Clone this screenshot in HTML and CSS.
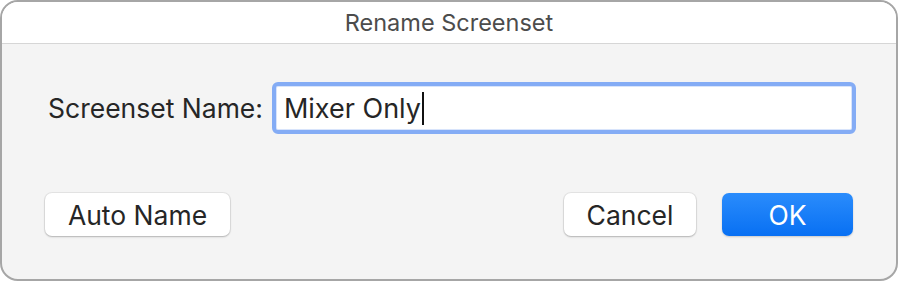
FILE: index.html
```html
<!DOCTYPE html>
<html lang="en">
<head>
<meta charset="utf-8">
<title>Rename Screenset</title>
<link rel="stylesheet" href="styles.css">
</head>
<body>
  <div class="window">
    <div class="titlebar">Rename Screenset</div>
    <div class="content">
      <div class="row">
        <label class="label">Screenset Name:</label>
        <div class="field"><span class="value">Mixer Only</span><span class="caret"></span></div>
      </div>
      <div class="buttons">
        <button class="btn btn-auto">Auto Name</button>
        <div class="spacer"></div>
        <button class="btn btn-cancel">Cancel</button>
        <button class="btn btn-ok">OK</button>
      </div>
    </div>
  </div>
</body>
</html>
```

FILE: styles.css
```css
html, body {
  margin: 0;
  padding: 0;
  background: #ffffff;
}

body {
  font-family: Inter, "Liberation Sans", Arial, sans-serif;
  width: 899px;
  height: 282px;
}

.window {
  box-sizing: border-box;
  width: 898px;
  height: 281px;
  border: 2px solid #a6a6a6;
  border-radius: 18px;
  overflow: hidden;
  display: flex;
  flex-direction: column;
  background: #f4f4f4;
}

.titlebar {
  box-sizing: border-box;
  height: 42px;
  flex: 0 0 42px;
  background: #ffffff;
  border-bottom: 1px solid #d6d6d6;
  display: flex;
  align-items: center;
  justify-content: center;
  font-size: 23.5px;
  color: #4c4c4c;
  padding-bottom: 1px;
}

.content {
  flex: 1;
  display: flex;
  flex-direction: column;
  padding: 38px 43px 0 43px;
}

.row {
  display: flex;
  align-items: center;
}

.label {
  font-size: 26.5px;
  color: #262626;
  margin-left: 3px;
  margin-right: 9px;
  white-space: nowrap;
}

.field {
  box-sizing: border-box;
  flex: 0 0 584px;
  width: 584px;
  height: 52px;
  border: 4px solid #84acf5;
  border-radius: 6px;
  background: #ffffff;
  box-shadow: inset 0 0 0 1px #d8e4fb;
  display: flex;
  align-items: center;
  padding-left: 8px;
  font-size: 27px;
  color: #262626;
}

.caret {
  width: 2px;
  height: 33px;
  background: #111;
  margin-left: 1px;
}

.buttons {
  display: flex;
  align-items: center;
  margin-top: 59px;
}

.spacer {
  flex: 1;
}

.btn {
  box-sizing: border-box;
  height: 43px;
  border: none;
  border-radius: 7px;
  font-family: Inter, "Liberation Sans", Arial, sans-serif;
  font-size: 26.5px;
  color: #262626;
  background: #ffffff;
  box-shadow: 0 0 0 1px rgba(0,0,0,0.06), 0 1px 2px rgba(0,0,0,0.22);
  padding: 0;
}

.btn-auto {
  width: 185px;
}

.btn-cancel {
  width: 132px;
}

.btn-ok {
  width: 131px;
  margin-left: 26px;
  color: #ffffff;
  background: linear-gradient(#2a8cfc, #0870f3);
  box-shadow: 0 1px 2px rgba(0,0,0,0.18);
}
```
